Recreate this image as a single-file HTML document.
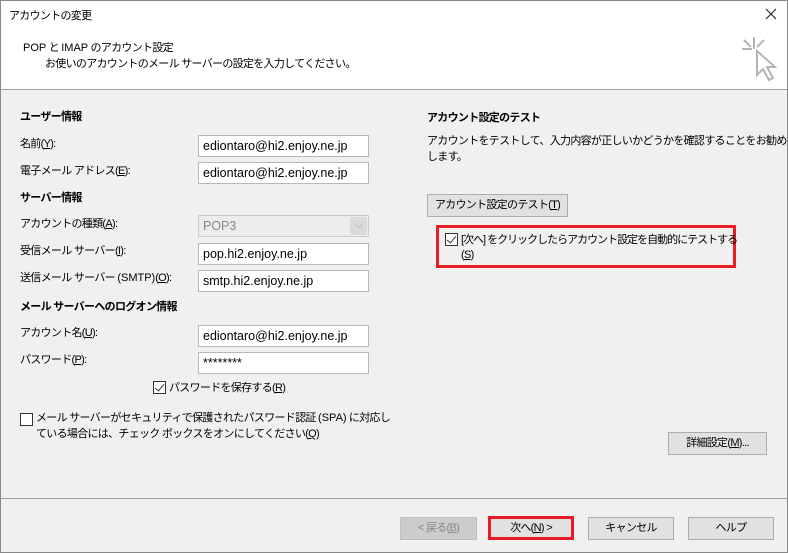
<!DOCTYPE html>
<html><head><meta charset="utf-8"><style>
*{margin:0;padding:0;box-sizing:border-box}
body{width:788px;height:553px;background:#f0f0f0;font-family:"Liberation Sans","Noto Sans CJK JP",sans-serif;font-size:11px;letter-spacing:-0.7px;color:#000;position:relative;overflow:hidden}
.a{position:absolute;white-space:nowrap;line-height:14px}
.b{font-weight:bold}
.in{position:absolute;background:#fff;border:1px solid #b8b8b8;height:22px;width:171px;left:198px;padding:3px 0 0 4px;font-size:12.5px;letter-spacing:0;line-height:15px;white-space:nowrap}
.btn{position:absolute;background:#e1e1e1;border:1px solid #adadad;height:23px;text-align:center;line-height:21px;white-space:nowrap}
.cb{position:absolute;width:13px;height:13px;border:1px solid #333;background:#fff}
.cb.c::after{content:"";position:absolute;left:3px;top:0px;width:4px;height:8px;border:solid #333;border-width:0 1.5px 1.5px 0;transform:rotate(40deg)}
u{text-decoration:underline}
.l{letter-spacing:0}
</style></head><body>
<div style="position:absolute;left:0;top:0;width:788px;height:90px;background:#fff;border-bottom:1px solid #a0a0a0"></div>
<div style="position:absolute;left:0;top:0;width:788px;height:553px;border:1px solid #888"></div>
<div class="a" style="left:9px;top:9px">アカウントの変更</div>
<svg style="position:absolute;left:765px;top:8px" width="12" height="12" viewBox="0 0 12 12" stroke="#222" stroke-width="1.1"><path d="M1 1L11 11M11 1L1 11"/></svg>
<div class="a" style="left:23px;top:41px"><span class="l">POP</span> と <span class="l">IMAP</span> のアカウント設定</div>
<div class="a" style="left:45px;top:57px">お使いのアカウントのメール サーバーの設定を入力してください。</div>
<svg style="position:absolute;left:740px;top:36px" width="40" height="50" viewBox="0 0 40 50" fill="none" stroke="#b4b4b4" stroke-width="2">
<path d="M14 1v12M2 13h10M4 4l7 7M24 4l-7 7M17 15v24l6-6 6 11 4-2-6-11h8z"/></svg>
<div style="position:absolute;left:0;top:498px;width:788px;height:1px;background:#a0a0a0"></div>

<div class="a b" style="left:20px;top:110px">ユーザー情報</div>
<div class="a" style="left:20px;top:137px">名前(<u>Y</u>):</div>
<div class="in" style="top:135px">ediontaro@hi2.enjoy.ne.jp</div>
<div class="a" style="left:20px;top:164px">電子メール アドレス(<u>E</u>):</div>
<div class="in" style="top:162px">ediontaro@hi2.enjoy.ne.jp</div>
<div class="a b" style="left:20px;top:191px">サーバー情報</div>
<div class="a" style="left:20px;top:217px">アカウントの種類(<u>A</u>):</div>
<div class="in" style="top:215px;background:#ececec;color:#888;border-color:#ccc">POP3</div>
<div style="position:absolute;left:350px;top:217px;width:17px;height:18px;background:#dadada;color:#999;font-size:10px;text-align:center;line-height:18px">⌵</div>
<div class="a" style="left:20px;top:244px">受信メール サーバー(<u>I</u>):</div>
<div class="in" style="top:243px">pop.hi2.enjoy.ne.jp</div>
<div class="a" style="left:20px;top:271px">送信メール サーバー <span class="l">(SMTP)</span>(<u>O</u>):</div>
<div class="in" style="top:270px">smtp.hi2.enjoy.ne.jp</div>
<div class="a b" style="left:20px;top:300px">メール サーバーへのログオン情報</div>
<div class="a" style="left:20px;top:326px">アカウント名(<u>U</u>):</div>
<div class="in" style="top:325px">ediontaro@hi2.enjoy.ne.jp</div>
<div class="a" style="left:20px;top:353px">パスワード(<u>P</u>):</div>
<div class="in" style="top:352px">********</div>
<div class="cb c" style="left:153px;top:381px"></div>
<div class="a" style="left:169px;top:381px">パスワードを保存する(<u>R</u>)</div>
<div class="cb" style="left:20px;top:413px"></div>
<div class="a" style="left:36px;top:411px">メール サーバーがセキュリティで保護されたパスワード認証 <span class="l">(SPA)</span> に対応し</div>
<div class="a" style="left:36px;top:427px">ている場合には、チェック ボックスをオンにしてください(<u>Q</u>)</div>

<div class="a b" style="left:427px;top:111px">アカウント設定のテスト</div>
<div class="a" style="left:427px;top:134px">アカウントをテストして、入力内容が正しいかどうかを確認することをお勧め</div>
<div class="a" style="left:427px;top:150px">します。</div>
<div class="btn" style="left:427px;top:194px;width:141px">アカウント設定のテスト(<u>T</u>)</div>
<div style="position:absolute;left:436px;top:225px;width:300px;height:43px;border:3px solid #e81c24"></div>
<div class="cb c" style="left:445px;top:233px"></div>
<div class="a" style="left:461px;top:233px;letter-spacing:-1px">[次へ] をクリックしたらアカウント設定を自動的にテストする</div>
<div class="a" style="left:461px;top:248px">(<u>S</u>)</div>
<div class="btn" style="left:668px;top:432px;width:99px">詳細設定(<u>M</u>)...</div>

<div class="btn" style="left:400px;top:517px;width:77px;background:#ccc;border-color:#bfbfbf;color:#888">&lt; 戻る(<u>B</u>)</div>
<div class="btn" style="left:488px;top:516px;width:86px;border:3px solid #e81c24;line-height:19px;height:24px">次へ(<u>N</u>) &gt;</div>
<div class="btn" style="left:588px;top:517px;width:86px">キャンセル</div>
<div class="btn" style="left:688px;top:517px;width:86px">ヘルプ</div>
</body></html>
